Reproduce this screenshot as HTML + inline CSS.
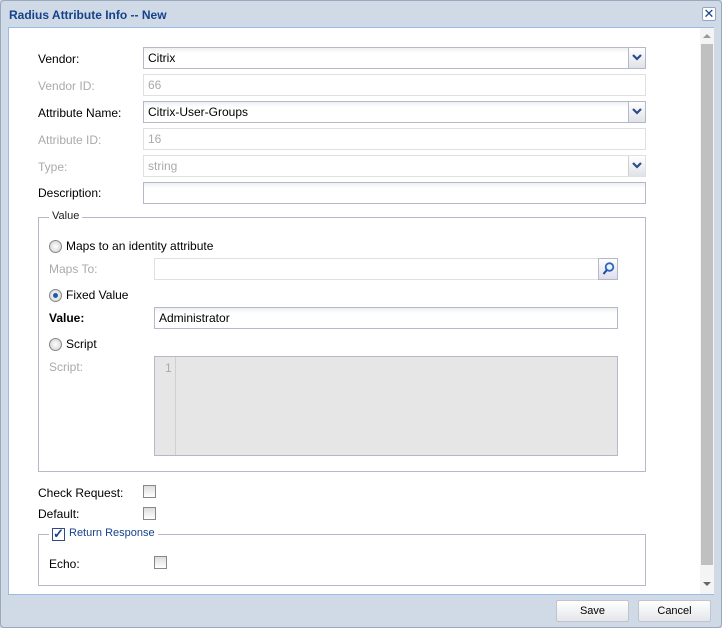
<!DOCTYPE html>
<html><head><style>
*{box-sizing:border-box;margin:0;padding:0}
body{width:722px;height:628px;background:#cfdae6;font-family:"Liberation Sans",sans-serif;font-size:12px;color:#000;position:relative;overflow:hidden}
.win{position:absolute;left:0;top:0;width:722px;height:628px;border:1px solid #99a8bd;border-radius:4px;background:#cfdae6}
.title{position:absolute;left:8px;top:7px;font-weight:bold;color:#15428b;font-size:12px}
.close{position:absolute;left:701px;top:6px;width:14px;height:14px;border:1px solid #8fa6c6;background:#fff;border-radius:2px;color:#15428b;font-size:13px;line-height:11px;text-align:center}
.body{position:absolute;left:8px;top:27px;width:706px;height:568px;background:#fff;border:1px solid #99bbe8}
.a{position:absolute}
.lbl{position:absolute;font-size:12px}
.dis{color:#aaa}
.inp{position:absolute;border:1px solid #b5b8c8;background:linear-gradient(#eef0f3,#fff 5px);height:22px;padding:3px 4px;font-size:12px}
.inp.d{border-color:#e0e0e0;background:#fff;color:#aaa}
.trig{position:absolute;right:0;top:0;width:17px;height:20px;border-left:1px solid #b5b8c8;background:linear-gradient(#fff,#dfe2e7)}
.trig svg{position:absolute;left:3px;top:6px}
.fs{position:absolute;border:1px solid #b5b8c8}
.leg{position:absolute;background:#fff;padding:0 3px;font-size:11px;color:#15428b}
.radio{position:absolute;width:13px;height:13px;border-radius:50%;border:1px solid #888;background:radial-gradient(#fff,#ccc)}
.radio.on:after{content:"";position:absolute;left:3px;top:3px;width:5px;height:5px;border-radius:50%;background:#1e5bb0}
.cb{position:absolute;width:13px;height:13px;border:1px solid #888;background:linear-gradient(#ddd,#fff)}
.btn{position:absolute;height:22px;border:1px solid #c0c4cc;border-radius:2px;background:linear-gradient(#fff,#e4e6ea);text-align:center;line-height:20px;font-size:11px}
</style></head><body>
<div class="win">
<div class="title">Radius Attribute Info -- New</div>
<div class="close">✕</div>
</div>
<div class="body"></div>
<div class="a" style="left:700px;top:28px;width:14px;height:566px;background:#f4f4f4"></div>
<div class="a" style="left:701px;top:44px;width:12px;height:521px;background:#c0c0c0"></div>
<div class="a" style="left:703px;top:34px;width:0;height:0;border-left:4px solid transparent;border-right:4px solid transparent;border-bottom:4px solid #999"></div>
<div class="a" style="left:703px;top:582px;width:0;height:0;border-left:4px solid transparent;border-right:4px solid transparent;border-top:4px solid #666"></div>

<div class="lbl" style="left:38px;top:52px">Vendor:</div>
<div class="inp" style="left:143px;top:47px;width:503px">Citrix<div class="trig"><svg width="10" height="8"><path d="M1 1L5 5L9 1" fill="none" stroke="#2d4b87" stroke-width="2.2"/></svg></div></div>
<div class="lbl dis" style="left:38px;top:79px">Vendor ID:</div>
<div class="inp d" style="left:143px;top:74px;width:503px">66</div>
<div class="lbl" style="left:38px;top:106px">Attribute Name:</div>
<div class="inp" style="left:143px;top:101px;width:503px">Citrix-User-Groups<div class="trig"><svg width="10" height="8"><path d="M1 1L5 5L9 1" fill="none" stroke="#2d4b87" stroke-width="2.2"/></svg></div></div>
<div class="lbl dis" style="left:38px;top:133px">Attribute ID:</div>
<div class="inp d" style="left:143px;top:128px;width:503px">16</div>
<div class="lbl dis" style="left:38px;top:160px">Type:</div>
<div class="inp d" style="left:143px;top:155px;width:503px">string<div class="trig" style="border-color:#d0d0d0"><svg width="10" height="8"><path d="M1 1L5 5L9 1" fill="none" stroke="#2d4b87" stroke-width="2.2"/></svg></div></div>
<div class="lbl" style="left:38px;top:186px">Description:</div>
<div class="inp" style="left:143px;top:182px;width:503px"></div>

<div class="fs" style="left:38px;top:217px;width:608px;height:255px"></div>
<div class="leg" style="left:49px;top:210px;color:#222">Value</div>
<div class="radio" style="left:49px;top:240px"></div>
<div class="lbl" style="left:66px;top:239px">Maps to an identity attribute</div>
<div class="lbl dis" style="left:49px;top:262px">Maps To:</div>
<div class="inp d" style="left:154px;top:258px;width:464px"></div>
<div class="a" style="left:598px;top:258px;width:20px;height:22px;border:1px solid #b5b8c8;background:linear-gradient(#fff,#dde)"><svg width="18" height="20"><circle cx="10.5" cy="8" r="3.8" fill="none" stroke="#2a6bc0" stroke-width="1.8"/><line x1="7.8" y1="11" x2="4.5" y2="15" stroke="#1d4a90" stroke-width="2"/></svg></div>
<div class="radio on" style="left:49px;top:289px"></div>
<div class="lbl" style="left:66px;top:288px">Fixed Value</div>
<div class="lbl" style="left:49px;top:311px;font-weight:bold">Value:</div>
<div class="inp" style="left:154px;top:307px;width:464px">Administrator</div>
<div class="radio" style="left:49px;top:338px"></div>
<div class="lbl" style="left:66px;top:337px">Script</div>
<div class="lbl dis" style="left:49px;top:360px">Script:</div>
<div class="a" style="left:154px;top:356px;width:464px;height:100px;border:1px solid #b5b8c8;background:#e6e6e6"></div>
<div class="a" style="left:175px;top:357px;width:1px;height:98px;background:#d0d0d0"></div>
<div class="lbl dis" style="left:165px;top:361px">1</div>

<div class="lbl" style="left:38px;top:486px">Check Request:</div>
<div class="cb" style="left:143px;top:485px"></div>
<div class="lbl" style="left:38px;top:507px">Default:</div>
<div class="cb" style="left:143px;top:507px"></div>
<div class="fs" style="left:38px;top:534px;width:608px;height:52px"></div>
<div class="leg" style="left:49px;top:527px;padding-left:20px">Return Response</div>
<div class="cb" style="left:52px;top:528px;border-color:#2d4b87;background:#fff;color:#15428b;font-size:13px;line-height:10px;text-align:center;font-weight:bold">✓</div>
<div class="lbl" style="left:49px;top:557px">Echo:</div>
<div class="cb" style="left:154px;top:556px"></div>

<div class="btn" style="left:556px;top:600px;width:73px">Save</div>
<div class="btn" style="left:638px;top:600px;width:73px">Cancel</div>
</body></html>
